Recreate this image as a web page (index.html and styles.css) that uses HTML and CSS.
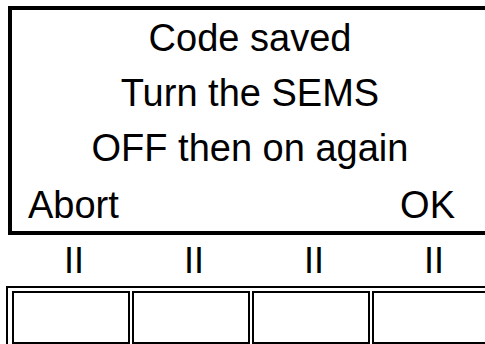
FILE: index.html
```html
<!DOCTYPE html>
<html>
<head>
<meta charset="utf-8">
<link rel="stylesheet" href="styles.css">
</head>
<body>
<div class="screen">
  <div class="display">
    <div class="line">Code saved</div>
    <div class="line">Turn the SEMS</div>
    <div class="line">OFF then on again</div>
    <div class="actions"><span class="abort">Abort</span><span class="ok">OK</span></div>
  </div>
  <div class="labels">
    <span class="label">II</span>
    <span class="label">II</span>
    <span class="label">II</span>
    <span class="label">II</span>
  </div>
  <div class="keys">
    <div class="key"></div>
    <div class="key"></div>
    <div class="key"></div>
    <div class="key"></div>
  </div>
</div>
</body>
</html>
```
FILE: styles.css
```css
html, body {
  margin: 0;
  padding: 0;
  overflow: hidden;
  background: #fff;
}
.screen {
  width: 485px;
  height: 344px;
  overflow: hidden;
  padding-top: 6px;
  box-sizing: border-box;
  font-family: "Liberation Sans", Arial, sans-serif;
  color: #000;
}
.display {
  margin-left: 8px;
  width: 473px;
  border: 4px solid #000;
  border-right: none;
  font-size: 38px;
}
.line {
  height: 55px;
  line-height: 56px;
  padding-left: 3px;
  text-align: center;
}
.actions {
  height: 56px;
  line-height: 61px;
  display: flex;
  justify-content: space-between;
  padding: 0 30px 0 16px;
}
.labels {
  margin-top: 6px;
  display: grid;
  grid-template-columns: repeat(4, 120px);
  margin-left: 14px;
  font-size: 36px;
  line-height: 40px;
  height: 40px;
}
.label {
  text-align: center;
}
.keys {
  margin-top: 5px;
  margin-left: 6px;
  width: 473px;
  height: 56px;
  overflow: hidden;
  border: 2px solid #000;
  border-right: none;
  padding: 3px 0 0 4px;
  display: flex;
  gap: 2px;
}
.key {
  flex: none;
  width: 114px;
  height: 49px;
  border: 2px solid #000;
}
```
